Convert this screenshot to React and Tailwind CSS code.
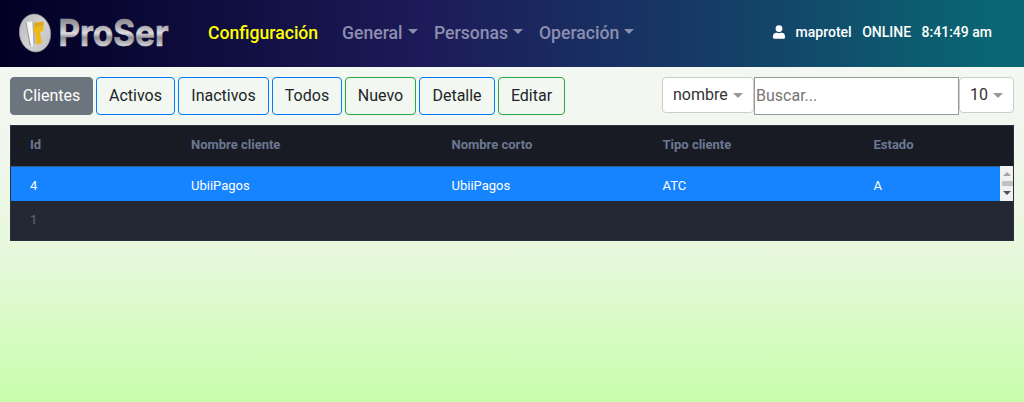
import React from 'react';

const menus = [
  { label: 'General', width: 'w-[92px]' },
  { label: 'Personas', width: 'w-[105px]' },
  { label: 'Operación', width: 'w-[100px]' },
];

const actions = [
  { label: 'Clientes', style: 'w-[83px] border-[#6c757d] bg-[#6c757d] text-white' },
  { label: 'Activos', style: 'w-[79px] border-[#007bff] text-[#212529]' },
  { label: 'Inactivos', style: 'w-[91px] border-[#007bff] text-[#212529]' },
  { label: 'Todos', style: 'w-[70px] border-[#007bff] text-[#212529]' },
  { label: 'Nuevo', style: 'w-[71px] border-[#28a745] text-[#212529]' },
  { label: 'Detalle', style: 'w-[76px] border-[#007bff] text-[#212529]' },
  { label: 'Editar', style: 'w-[67px] border-[#28a745] text-[#212529]' },
];

const columns = 'grid grid-cols-[161px_260.5px_211px_211px_1fr] pl-[19px] text-[13px]';

function Caret({ className }) {
  return (
    <svg viewBox="0 0 10 5" className={className} fill="currentColor" aria-hidden="true">
      <path d="M0 0H10L5 5Z" />
    </svg>
  );
}

function Logo() {
  return (
    <svg width="154" height="50" viewBox="0 0 154 50" className="block shrink-0 overflow-visible">
      <defs>
        <linearGradient id="metal" x1="0" y1="6" x2="0" y2="35" gradientUnits="userSpaceOnUse">
          <stop offset="0" stopColor="#85858c" />
          <stop offset=".3" stopColor="#adadb2" />
          <stop offset=".52" stopColor="#dddde0" />
          <stop offset=".68" stopColor="#8f8f96" />
          <stop offset="1" stopColor="#dcdcde" />
        </linearGradient>
        <linearGradient id="disc" x1="0" y1="0" x2="1" y2="1">
          <stop offset="0" stopColor="#b4b4b6" />
          <stop offset=".5" stopColor="#d2d2d3" />
          <stop offset="1" stopColor="#c0c0c4" />
        </linearGradient>
      </defs>
      <ellipse cx="17" cy="21" rx="15.6" ry="19" fill="url(#disc)" stroke="#96969b" strokeWidth=".6" transform="rotate(-8 17 21)" />
      <path d="M8 10L14.5 9.5L15.5 34L12.5 34.5Z" fill="#f7f7f7" />
      <path d="M7.5 10H8.5L13 34.5L11.5 33.5Z" fill="#a0a0a4" />
      <path d="M14.5 9.5L16 11L17.5 30L15.5 34Z" fill="#b0b0b2" />
      <path d="M16 11L25.5 9.5L25.5 18.5L22 20L24 31L18.5 32.5L17 21L15.5 20Z" fill="#ecb915" />
      <path d="M16 11L25.5 9.5L25 14L17 15.5Z" fill="#dcaa20" />
      <text x="40.5" y="34" textLength="110" lengthAdjust="spacingAndGlyphs" fontFamily="Inter, sans-serif" fontSize="37" fontWeight="700" fill="url(#metal)" stroke="url(#metal)" strokeWidth=".7">ProSer</text>
    </svg>
  );
}

export default function App() {
  return (
    <div className="h-[402px] w-full overflow-hidden bg-[linear-gradient(to_bottom,#f4f8f4_0%,#f1f7ef_35%,#e6f8da_65%,#c8feac_100%)] font-['Roboto',sans-serif]">
      <nav className="flex h-[67px] items-start bg-[linear-gradient(90deg,#020024_0%,#1d1b59_42%,#163a66_68%,#0a6572_96%,#0a6773_100%)] pl-[18px] pt-3">
        <Logo />
        <div className="flex h-[42px] items-center pl-[36px] text-[17.6px] font-medium">
          <span className="w-[134px] text-[#ffff00]">Configuración</span>
          {menus.map(({ label, width }) => (
            <span key={label} className={`flex shrink-0 items-center gap-[5px] text-[#8d8eae] ${width}`}>
              {label}
              <Caret className="-mt-0.5 h-[5px] w-[10px]" />
            </span>
          ))}
        </div>
        <div className="ml-auto flex h-10 items-center gap-[10.5px] pr-8 text-sm font-medium text-white">
          <svg viewBox="0 0 448 512" className="h-[14px] w-[12px]" fill="currentColor">
            <path d="M224 256a128 128 0 1 0 0-256 128 128 0 0 0 0 256zm90 32h-17a174 174 0 0 1-146 0h-17A134 134 0 0 0 0 422v42a48 48 0 0 0 48 48h352a48 48 0 0 0 48-48v-42a134 134 0 0 0-134-134z" />
          </svg>
          <span>maprotel</span>
          <span>ONLINE</span>
          <span>8:41:49 am</span>
        </div>
      </nav>
      <main className="px-[10px] pt-[10px]">
        <div className="flex h-12 items-start">
          <div className="flex gap-[3px]">
            {actions.map(({ label, style }) => (
              <button key={label} className={`h-[38px] rounded border text-base ${style}`}>{label}</button>
            ))}
          </div>
          <div className="ml-auto flex items-start text-base text-[#333]">
            <button className="flex h-[36px] w-[92px] items-center gap-[5px] rounded border border-[#ccc] bg-white pl-[10px]">
              nombre<Caret className="h-[5px] w-[10px] text-[#999]" />
            </button>
            <input type="text" placeholder="Buscar..." className="h-[38px] w-[205px] border border-[#999] bg-white px-px pb-px placeholder:text-[#757575]" />
            <button className="flex h-[36px] w-[55px] items-center gap-[5px] rounded border border-[#ccc] bg-white pl-[10px]">
              10<Caret className="h-[5px] w-[10px] text-[#999]" />
            </button>
          </div>
        </div>
        <section className="h-[116px] border border-[#2c303d] bg-[#242835]">
          <div className={`${columns} h-[40px] items-center bg-[#191b24] pb-0.5 font-bold text-[#6c7893]`}>
            <span>Id</span><span>Nombre cliente</span><span>Nombre corto</span><span>Tipo cliente</span><span>Estado</span>
          </div>
          <div className="flex h-[35px]">
            <div className={`${columns} min-w-0 flex-1 items-center border-t border-[#345b91] bg-[#1683ff] pt-[3px] text-white`}>
              <span>4</span><span>UbiiPagos</span><span>UbiiPagos</span><span>ATC</span><span>A</span>
            </div>
            <div className="flex w-[13px] flex-col items-end bg-[#f1f1f1] pt-[6px]">
              <Caret className="mr-[2px] h-1 w-2 rotate-180 text-[#a3a3a3]" />
              <div className="my-[5px] h-[5px] w-[11px] bg-[#c1c1c1]" />
              <Caret className="mr-[2px] h-1 w-2 text-[#505050]" />
            </div>
          </div>
          <div className="h-[38px] pl-[19px] text-[13px] leading-[38px] text-[#626673]">1</div>
        </section>
      </main>
    </div>
  );
}
